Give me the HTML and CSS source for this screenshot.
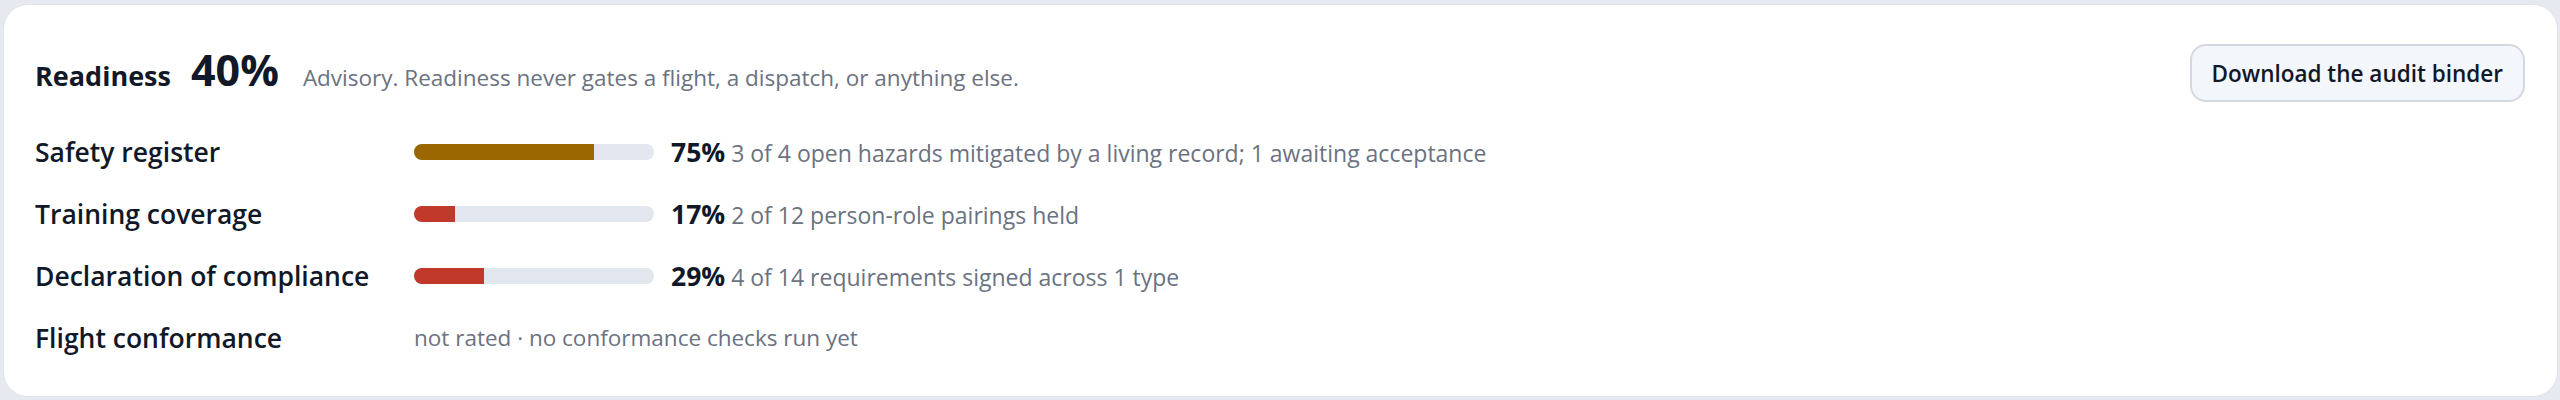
FILE: index.html
```html
<!DOCTYPE html>
<html lang="en">
<head>
    <meta charset="UTF-8">
    <meta name="viewport" content="width=device-width, initial-scale=1.0">
    <title>Readiness</title>
    <link rel="stylesheet" href="styles.css">
</head>
<body>
    <div class="page">
        <div class="card">
            <div class="header">
                <div class="title">
                    <span class="title-label">Readiness</span>
                    <span class="title-score">40%</span>
                    <span class="title-note">Advisory. Readiness never gates a flight, a dispatch, or anything else.</span>
                </div>
                <button class="binder">Download the audit binder</button>
            </div>
            <div class="rows">
                <div class="row">
                    <div class="label">Safety register</div>
                    <div class="bar"><div class="fill amber" style="width: 75%"></div></div>
                    <div class="stat"><b>75%</b> 3 of 4 open hazards mitigated by a living record; 1 awaiting acceptance</div>
                </div>
                <div class="row">
                    <div class="label">Training coverage</div>
                    <div class="bar"><div class="fill red" style="width: 17%"></div></div>
                    <div class="stat"><b>17%</b> 2 of 12 person-role pairings held</div>
                </div>
                <div class="row">
                    <div class="label">Declaration of compliance</div>
                    <div class="bar"><div class="fill red" style="width: 29%"></div></div>
                    <div class="stat"><b>29%</b> 4 of 14 requirements signed across 1 type</div>
                </div>
                <div class="row">
                    <div class="label">Flight conformance</div>
                    <div class="unrated">not rated · no conformance checks run yet</div>
                </div>
            </div>
        </div>
    </div>
</body>
</html>
```

FILE: styles.css
```css
* {
    box-sizing: border-box;
}
body {
    margin: 0;
    background: #e6e9ef;
    font-family: "Open Sans", "Noto Sans", sans-serif;
    color: #111827;
}
.page {
    padding: 4px 2px 3px 3px;
}
.card {
    height: 393px;
    background: #ffffff;
    border: 1px solid #dfe3ea;
    border-radius: 25px;
    padding: 39px 32px 0 31px;
}
.header {
    display: flex;
    align-items: center;
    min-height: 58px;
}
.title {
    display: flex;
    align-items: baseline;
    margin-top: -4px;
}
.title-label {
    font-size: 27px;
    font-weight: 700;
}
.title-score {
    font-size: 43px;
    font-weight: 700;
    margin-left: 20px;
    line-height: 1;
}
.title-note {
    font-size: 22.5px;
    color: #6b7280;
    margin-left: 24px;
}
.binder {
    margin-left: auto;
    height: 58px;
    padding: 0 20px;
    background: #f3f6fb;
    border: 2px solid #d3d8e2;
    border-radius: 16px;
    font-family: inherit;
    font-size: 22.5px;
    font-weight: 600;
    color: #111827;
}
.rows {
    margin-top: 28px;
    display: flex;
    flex-direction: column;
    gap: 19px;
}
.row {
    display: flex;
    align-items: center;
    height: 43px;
}
.label {
    width: 360px;
    margin-right: 19px;
    font-size: 26.5px;
    font-weight: 600;
}
.bar {
    width: 240px;
    height: 16px;
    border-radius: 8px;
    background: #e2e7ef;
    overflow: hidden;
}
.fill {
    height: 100%;
}
.amber {
    background: #9a6700;
}
.red {
    background: #c0392b;
}
.stat {
    margin-left: 17px;
    font-size: 23px;
    color: #6b7280;
}
.stat b {
    font-size: 26.5px;
    color: #111827;
}
.unrated {
    font-size: 22.5px;
    color: #6b7280;
}
```
